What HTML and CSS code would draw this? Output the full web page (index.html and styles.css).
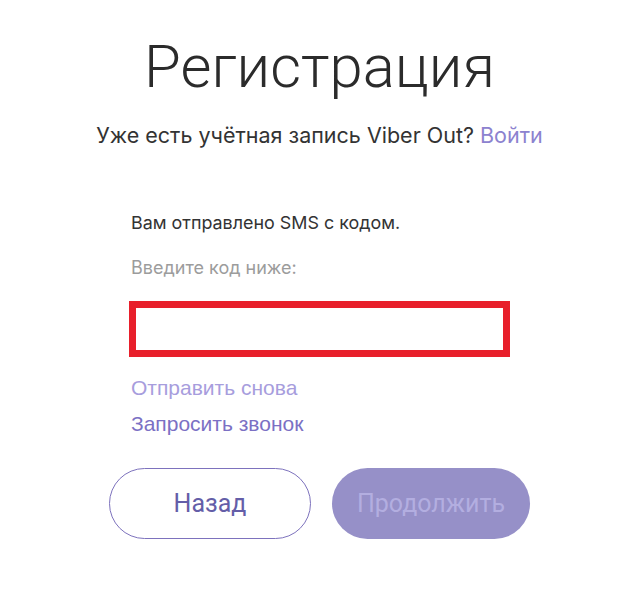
FILE: index.html
```html
<!DOCTYPE html>
<html lang="ru">
<head>
<meta charset="utf-8">
<title>Регистрация</title>
<link rel="stylesheet" href="styles.css">
</head>
<body>
<main class="page">
  <h1 class="title">Регистрация</h1>
  <p class="subtitle">Уже есть учётная запись Viber Out? <a class="login" href="#">Войти</a></p>
  <form class="form">
    <p class="sent">Вам отправлено SMS с кодом.</p>
    <p class="hint">Введите код ниже:</p>
    <input class="code" type="text" aria-label="Код">
    <a class="resend" href="#">Отправить снова</a>
    <a class="call" href="#">Запросить звонок</a>
  </form>
  <div class="actions">
    <button class="btn btn-back" type="button">Назад</button>
    <button class="btn btn-next" type="button">Продолжить</button>
  </div>
</main>
</body>
</html>
```
FILE: styles.css
```css
html, body {
  margin: 0;
  padding: 0;
  background: #ffffff;
}
.page {
  width: 624px;
  box-sizing: border-box;
  padding: 29px 0 0 15px;
  display: flex;
  flex-direction: column;
  align-items: center;
}
.title {
  margin: 0;
  font-family: Roboto, sans-serif;
  font-weight: 300;
  font-size: 59.8px;
  line-height: 76px;
  color: #2b2b2b;
}
.subtitle {
  margin: 16px 0 0;
  font-family: Inter, sans-serif;
  font-weight: 400;
  font-size: 21.5px;
  line-height: 28px;
  color: #333333;
}
.login {
  color: #8c82cf;
  text-decoration: none;
}
.form {
  width: 381px;
  margin-top: 62px;
  display: flex;
  flex-direction: column;
  align-items: flex-start;
}
.sent {
  margin: 0 0 0 2px;
  font-family: Inter, sans-serif;
  font-size: 17.9px;
  line-height: 24px;
  color: #333333;
}
.hint {
  margin: 21px 0 0 2px;
  font-family: Inter, sans-serif;
  font-size: 18px;
  line-height: 24px;
  color: #9c9c9c;
}
.code {
  box-sizing: border-box;
  width: 381px;
  height: 56px;
  margin: 21px 0 0;
  border: 7px solid #e81f2b;
  border-radius: 0;
  outline: none;
  padding: 0 10px;
  background: #ffffff;
}
.resend, .call {
  margin-left: 2px;
  font-family: "Liberation Sans", Arial, sans-serif;
  font-size: 21px;
  line-height: 24px;
  text-decoration: none;
}
.resend {
  margin-top: 19px;
  color: #a79ddd;
}
.call {
  margin-top: 12px;
  color: #7b70c4;
}
.actions {
  margin-top: 32px;
  display: flex;
  gap: 21px;
}
.btn {
  box-sizing: border-box;
  height: 71px;
  border-radius: 36px;
  font-family: Roboto, sans-serif;
  font-weight: 400;
  font-size: 25px;
  cursor: pointer;
}
.btn-back {
  width: 202px;
  background: #ffffff;
  border: 1.5px solid #7d72bd;
  color: #645ea8;
}
.btn-next {
  width: 198px;
  background: #9690c8;
  border: none;
  color: #b3aee0;
}
```
